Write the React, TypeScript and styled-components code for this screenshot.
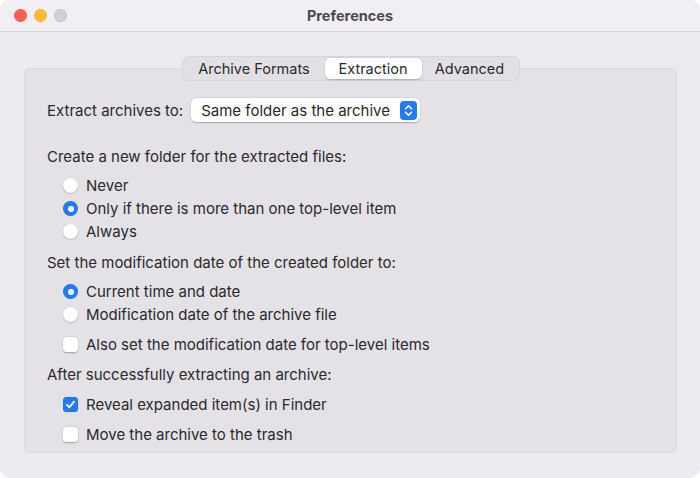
import React from 'react'
import styled, { createGlobalStyle } from 'styled-components'

const GlobalStyle = createGlobalStyle`
  html, body {
    margin: 0;
    padding: 0;
    background: #ffffff;
  }
  body {
    font-family: Inter, "Liberation Sans", Arial, sans-serif;
    -webkit-font-smoothing: antialiased;
  }
`

const Window = styled.div`
  width: 700px;
  height: 478px;
  border-radius: 10px;
  overflow: hidden;
  background: #ecebef;
  display: flex;
  flex-direction: column;
  box-sizing: border-box;
`

const TitleBar = styled.div`
  height: 32px;
  flex: none;
  background: #f1eff4;
  border-bottom: 1px solid #d4d2d7;
  box-sizing: border-box;
  display: flex;
  align-items: center;
  padding-left: 14px;
  position: relative;
`

const Light = styled.span<{ $color: string }>`
  width: 13px;
  height: 13px;
  border-radius: 50%;
  background: ${(p) => p.$color};
  margin-right: 7px;
  box-shadow: inset 0 0 0 0.5px rgba(0, 0, 0, 0.12);
`

const Title = styled.div`
  position: absolute;
  left: 0;
  right: 0;
  top: 0;
  bottom: 0;
  display: flex;
  align-items: center;
  justify-content: center;
  font-size: 14.5px;
  font-weight: 700;
  color: #4a494d;
  pointer-events: none;
`

const Content = styled.div`
  flex: 1;
  padding: 24px 23px 26px 24px;
  display: flex;
  flex-direction: column;
`

const TabBar = styled.div`
  align-self: center;
  display: flex;
  height: 25px;
  box-sizing: border-box;
  padding: 1px;
  background: #e2e0e5;
  border: 1px solid #d8d6db;
  border-radius: 7px;
  position: relative;
  z-index: 1;
`

const Tab = styled.div<{ $active?: boolean; $w: number }>`
  width: ${(p) => p.$w}px;
  height: 100%;
  display: flex;
  align-items: center;
  justify-content: center;
  box-sizing: border-box;
  font-size: 14.5px;
  color: #2b2a2e;
  border-radius: 5px;
  background: ${(p) => (p.$active ? '#ffffff' : 'transparent')};
  box-shadow: ${(p) => (p.$active ? '0 0.5px 1.5px rgba(0,0,0,0.25)' : 'none')};
`

const Group = styled.div`
  flex: 1;
  margin-top: -13px;
  background: #e4e2e7;
  border: 1px solid #dcdadf;
  border-radius: 5px;
  box-sizing: border-box;
  padding: 29px 22px 6px 22px;
  display: flex;
  flex-direction: column;
`

const Row = styled.div`
  display: flex;
  align-items: center;
  height: 24px;
`

const Label = styled.span`
  font-size: 15px;
  color: #2a292d;
`

const Popup = styled.div`
  margin-left: 8px;
  width: 229px;
  height: 24px;
  box-sizing: border-box;
  background: #ffffff;
  border-radius: 5px;
  box-shadow: 0 0.5px 1.5px rgba(0, 0, 0, 0.28);
  display: flex;
  align-items: center;
  justify-content: space-between;
  padding: 0 3px 0 10px;
  font-size: 15px;
  color: #2a292d;
`

const Stepper = styled.span`
  width: 17px;
  height: 19px;
  border-radius: 4px;
  background: #1f7cf3;
  display: flex;
  align-items: center;
  justify-content: center;
`

const Heading = styled.div<{ $top: number }>`
  font-size: 15px;
  line-height: 18px;
  color: #2a292d;
  margin-top: ${(p) => p.$top}px;
`

const Option = styled.label<{ $top?: number }>`
  display: flex;
  align-items: center;
  height: 23px;
  padding-left: 16px;
  margin-top: ${(p) => p.$top ?? 0}px;
  font-size: 15px;
  color: #2a292d;
  gap: 8px;
`

const Radio = styled.span<{ $on?: boolean }>`
  width: 15px;
  height: 15px;
  border-radius: 50%;
  box-sizing: border-box;
  background: ${(p) => (p.$on ? '#1f7cf3' : '#ffffff')};
  box-shadow: ${(p) =>
    p.$on ? 'inset 0 0 0 0.5px rgba(0,0,0,0.1)' : '0 0.5px 1.5px rgba(0,0,0,0.3)'};
  display: flex;
  align-items: center;
  justify-content: center;
  &::after {
    content: '';
    display: ${(p) => (p.$on ? 'block' : 'none')};
    width: 6px;
    height: 6px;
    border-radius: 50%;
    background: #ffffff;
  }
`

const Check = styled.span<{ $on?: boolean }>`
  width: 15px;
  height: 15px;
  border-radius: 3.5px;
  box-sizing: border-box;
  background: ${(p) => (p.$on ? '#1f7cf3' : '#ffffff')};
  box-shadow: ${(p) =>
    p.$on ? 'inset 0 0 0 0.5px rgba(0,0,0,0.1)' : '0 0.5px 1.5px rgba(0,0,0,0.3)'};
  display: flex;
  align-items: center;
  justify-content: center;
`

const Chevrons = () => (
  <svg width="9" height="13" viewBox="0 0 9 13" fill="none">
    <path d="M1.5 4.8 L4.5 1.8 L7.5 4.8" stroke="#fff" strokeWidth="1.6" strokeLinecap="round" strokeLinejoin="round" />
    <path d="M1.5 8.2 L4.5 11.2 L7.5 8.2" stroke="#fff" strokeWidth="1.6" strokeLinecap="round" strokeLinejoin="round" />
  </svg>
)

const Tick = () => (
  <svg width="11" height="11" viewBox="0 0 11 11" fill="none">
    <path d="M2 5.8 L4.4 8.3 L9 2.6" stroke="#fff" strokeWidth="1.8" strokeLinecap="round" strokeLinejoin="round" />
  </svg>
)

const App: React.FC = () => {
  return (
    <>
      <GlobalStyle />
      <Window>
        <TitleBar>
          <Light $color="#fe5f57" />
          <Light $color="#febc2e" />
          <Light $color="#d1cfd4" />
          <Title>Preferences</Title>
        </TitleBar>

        <Content>
          <TabBar>
            <Tab $w={141}>Archive Formats</Tab>
            <Tab $w={97} $active>
              Extraction
            </Tab>
            <Tab $w={96}>Advanced</Tab>
          </TabBar>

          <Group>
            <Row>
              <Label>Extract archives to:</Label>
              <Popup>
                Same folder as the archive
                <Stepper>
                  <Chevrons />
                </Stepper>
              </Popup>
            </Row>

            <Heading $top={26}>Create a new folder for the extracted files:</Heading>
            <Option $top={8}>
              <Radio />
              Never
            </Option>
            <Option>
              <Radio $on />
              Only if there is more than one top-level item
            </Option>
            <Option>
              <Radio />
              Always
            </Option>

            <Heading $top={11}>Set the modification date of the created folder to:</Heading>
            <Option $top={8}>
              <Radio $on />
              Current time and date
            </Option>
            <Option>
              <Radio />
              Modification date of the archive file
            </Option>
            <Option $top={7}>
              <Check />
              Also set the modification date for top-level items
            </Option>

            <Heading $top={10}>After successfully extracting an archive:</Heading>
            <Option $top={9}>
              <Check $on>
                <Tick />
              </Check>
              Reveal expanded item(s) in Finder
            </Option>
            <Option $top={7}>
              <Check />
              Move the archive to the trash
            </Option>
          </Group>
        </Content>
      </Window>
    </>
  )
}

export default App
